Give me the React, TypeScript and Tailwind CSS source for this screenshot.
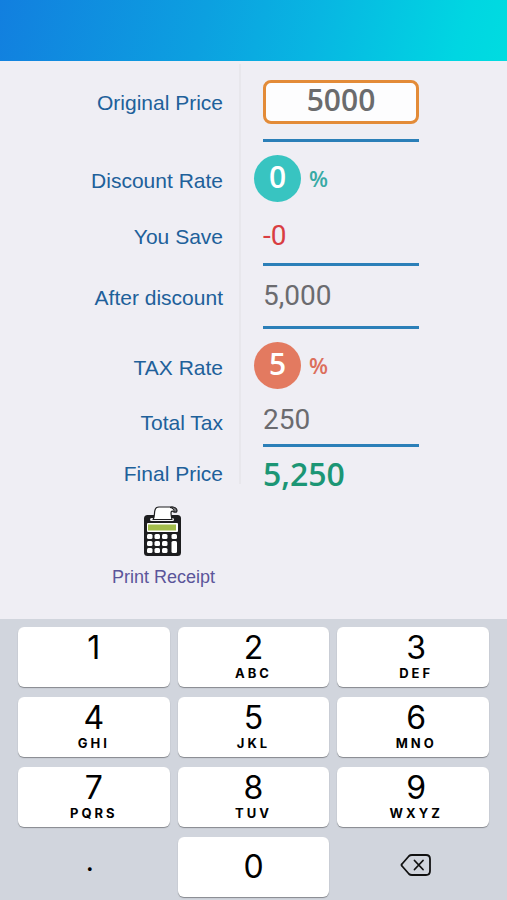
import { useState } from "react";
import type { ReactNode } from "react";

type Field = "price" | "discount" | "tax";

interface RowProps {
  label: string;
  htmlFor: string;
  className: string;
  labelPadding?: string;
  valuePadding?: string;
  underline?: boolean;
  children: ReactNode;
}

interface RateInputProps {
  id: string;
  value: string;
  color: string;
  percentColor: string;
  onChange: (value: string) => void;
  onFocus: () => void;
}

const KEYS = [
  { digit: "1", letters: "" },
  { digit: "2", letters: "ABC" },
  { digit: "3", letters: "DEF" },
  { digit: "4", letters: "GHI" },
  { digit: "5", letters: "JKL" },
  { digit: "6", letters: "MNO" },
  { digit: "7", letters: "PQRS" },
  { digit: "8", letters: "TUV" },
  { digit: "9", letters: "WXYZ" },
];

const formatAmount = (amount: number) =>
  amount.toLocaleString("en-US", { maximumFractionDigits: 2 });

const Row = ({
  label,
  htmlFor,
  className,
  labelPadding = "",
  valuePadding = "",
  underline,
  children,
}: RowProps) => (
  <div className={`grid grid-cols-[241fr_266fr] grid-rows-1 ${className}`}>
    <div
      className={`flex items-center justify-end border-r-2 border-[#e8e7ec] pr-4 ${labelPadding}`}
    >
      <label
        htmlFor={htmlFor}
        className="text-[21px] leading-6 whitespace-nowrap text-[#20609a]"
      >
        {label}
      </label>
    </div>
    <div className={`flex flex-col pr-[88px] pl-[22px] ${valuePadding}`}>
      <div className="flex min-h-0 flex-1 items-center font-['Roboto',sans-serif]">
        {children}
      </div>
      {underline && <div className="h-[3px] bg-[#2b7fb8]" />}
    </div>
  </div>
);

const RateInput = ({
  id,
  value,
  color,
  percentColor,
  onChange,
  onFocus,
}: RateInputProps) => (
  <div className="-ml-[9px] flex items-center gap-2 font-['Open_Sans',sans-serif]">
    <input
      id={id}
      value={value}
      inputMode="none"
      onChange={(e) => onChange(e.target.value)}
      onFocus={onFocus}
      className={`h-[47px] w-[47px] rounded-full pb-1 text-center text-[30px] leading-8 font-semibold text-white outline-none ${color}`}
    />
    <span className={`text-[22px] font-semibold ${percentColor}`}>%</span>
  </div>
);

const CalculatorIcon = () => (
  <svg width="40" height="51" viewBox="0 0 40 51" aria-hidden="true">
    <rect x="1" y="9" width="37" height="41" rx="3.5" fill="#1d1d1f" />
    <rect x="7" y="12" width="24" height="3" rx="1.5" fill="#f4f4f6" />
    <path
      d="M10 13.5C12 11 11 7 12 4C12.500 2 14 1 16 1H29C33 1 34.500 3.500 33.500 6H30.500C30 4.500 28 5 28 7C28 9 28.500 11 29 13.500Z"
      fill="#fff"
      stroke="#1d1d1f"
      strokeWidth="1.2"
      strokeLinejoin="round"
    />
    <path
      d="M27 1.500C30 2 31 3.500 31 6H33.500C34.500 3.500 33 1.500 29 1Z"
      fill="#77777a"
      stroke="#1d1d1f"
      strokeWidth="1"
    />
    <rect x="4" y="17" width="31" height="9" rx="1" fill="#fff" />
    <rect x="5" y="18.500" width="28" height="6" fill="#a3bd4b" />
    <g fill="#fff">
      <rect x="4" y="28" width="5.500" height="5" rx="1.500" />
      <rect x="11.500" y="28" width="5.500" height="5" rx="1.500" />
      <rect x="19" y="28" width="5.500" height="5" rx="1.500" />
      <rect x="28.500" y="28" width="5.500" height="5" rx="1.500" />
      <rect x="4" y="35" width="5.500" height="5" rx="1.500" />
      <rect x="11.500" y="35" width="5.500" height="5" rx="1.500" />
      <rect x="19" y="35" width="5.500" height="5" rx="1.500" />
      <rect x="4" y="42" width="5.500" height="5" rx="1.500" />
      <rect x="11.500" y="42" width="5.500" height="5" rx="1.500" />
      <rect x="19" y="42" width="5.500" height="5" rx="1.500" />
      <rect x="28.500" y="35" width="5.500" height="12" rx="1.500" />
    </g>
  </svg>
);

const BackspaceIcon = () => (
  <svg
    width="32"
    height="24"
    viewBox="0 0 32 24"
    fill="none"
    stroke="#111"
    strokeWidth="1.800"
    strokeLinecap="round"
    strokeLinejoin="round"
    aria-hidden="true"
  >
    <path d="M12 2H26Q30 2 30 6V18Q30 22 26 22H12Q10 22 9 21L2 13Q1 12 2 11L9 3Q10 2 12 2Z" />
    <path d="M14.500 7.500L23 16.500M23 7.500L14.500 16.500" />
  </svg>
);

const App = () => {
  const [active, setActive] = useState<Field>("price");
  const [values, setValues] = useState<Record<Field, string>>({
    price: "5000",
    discount: "0",
    tax: "5",
  });

  const update = (field: Field, value: string) =>
    setValues((prev) => ({ ...prev, [field]: value }));

  const press = (key: string) =>
    update(active, values[active] === "0" ? key : values[active] + key);

  const price = Number(values.price) || 0;
  const saved = (price * (Number(values.discount) || 0)) / 100;
  const discounted = price - saved;
  const tax = (discounted * (Number(values.tax) || 0)) / 100;

  return (
    <div className="flex min-h-screen flex-col bg-[#efeef4] font-['Liberation_Sans',Arial,sans-serif]">
      <header className="h-[61px] bg-linear-[105deg,#127fdf,#0ca0e0_40%,#08b6e2_62%,#00d6e2_90%,#00dce0]" />

      <main className="flex-1 pt-[3px]">
        <Row label="Original Price" htmlFor="price" className="h-[78px]" underline>
          <input
            id="price"
            value={values.price}
            inputMode="none"
            onChange={(e) => update("price", e.target.value)}
            onFocus={() => setActive("price")}
            className="h-11 w-full rounded-lg border-[3px] border-[#e38b38] bg-[#fdfdfe] pb-1 text-center font-['Open_Sans',sans-serif] text-[30px] leading-8 font-semibold text-[#6b6b6d] outline-none"
          />
        </Row>
        <Row
          label="Discount Rate"
          htmlFor="discount"
          className="h-[66px]"
          labelPadding="pt-3"
          valuePadding="pt-[6px]"
        >
          <RateInput
            id="discount"
            value={values.discount}
            color="bg-[#38c4c1]"
            percentColor="text-[#38aaa5]"
            onChange={(value) => update("discount", value)}
            onFocus={() => setActive("discount")}
          />
        </Row>
        <Row label="You Save" htmlFor="saved" className="h-[58px]" underline>
          <output id="saved" className="text-[28px] leading-8 text-[#d93d42]">
            -{formatAmount(saved)}
          </output>
        </Row>
        <Row label="After discount" htmlFor="after" className="h-[63px]" underline>
          <output id="after" className="text-[28px] leading-8 text-[#6b6b6f]">
            {formatAmount(discounted)}
          </output>
        </Row>
        <Row
          label="TAX Rate"
          htmlFor="tax"
          className="h-[66px]"
          labelPadding="pt-3"
          valuePadding="pt-[6px]"
        >
          <RateInput
            id="tax"
            value={values.tax}
            color="bg-[#e37a60]"
            percentColor="text-[#dc6f5c]"
            onChange={(value) => update("tax", value)}
            onFocus={() => setActive("tax")}
          />
        </Row>
        <Row
          label="Total Tax"
          htmlFor="total-tax"
          className="h-[52px]"
          labelPadding="pt-1"
          underline
        >
          <output id="total-tax" className="text-[28px] leading-8 text-[#6b6b6f]">
            {formatAmount(tax)}
          </output>
        </Row>
        <Row
          label="Final Price"
          htmlFor="final"
          className="h-[37px]"
          labelPadding="pt-4"
          valuePadding="pt-4"
        >
          <output
            id="final"
            className="font-['Open_Sans',sans-serif] text-[32px] leading-8 font-semibold text-[#1c9675]"
          >
            {formatAmount(discounted + tax)}
          </output>
        </Row>

        <div className="grid grid-cols-[241fr_266fr] pt-[22px]">
          <button
            type="button"
            onClick={() => window.print()}
            className="flex flex-col items-center gap-2 justify-self-end pr-[26px] text-lg leading-6 text-[#5b559a]"
          >
            <CalculatorIcon />
            Print Receipt
          </button>
        </div>
      </main>

      <div className="grid auto-rows-[60px] grid-cols-3 gap-x-2 gap-y-[10px] bg-[#d1d5dd] px-[18px] pt-2 pb-[3px] font-['Inter',sans-serif] text-black">
        {KEYS.map(({ digit, letters }) => (
          <button
            key={digit}
            type="button"
            onClick={() => press(digit)}
            className="flex flex-col items-center rounded-md bg-white pt-[5px] shadow-[0_1px_1px_#85888d] nth-[3n]:pl-[6px]"
          >
            <span className="text-[32px] leading-8">{digit}</span>
            <span className="text-[13px] leading-[18px] font-bold tracking-[3px]">
              {letters}
            </span>
          </button>
        ))}
        <button
          type="button"
          onClick={() => press(".")}
          className="pr-2 pb-3 text-[28px] leading-8"
        >
          .
        </button>
        <button
          type="button"
          onClick={() => press("0")}
          className="rounded-md bg-white text-[32px] leading-8 shadow-[0_1px_1px_#85888d]"
        >
          0
        </button>
        <button
          type="button"
          aria-label="Delete"
          onClick={() => update(active, values[active].slice(0, -1))}
          className="flex items-center justify-center pb-1 pl-[6px]"
        >
          <BackspaceIcon />
        </button>
      </div>
    </div>
  );
};

export default App;
